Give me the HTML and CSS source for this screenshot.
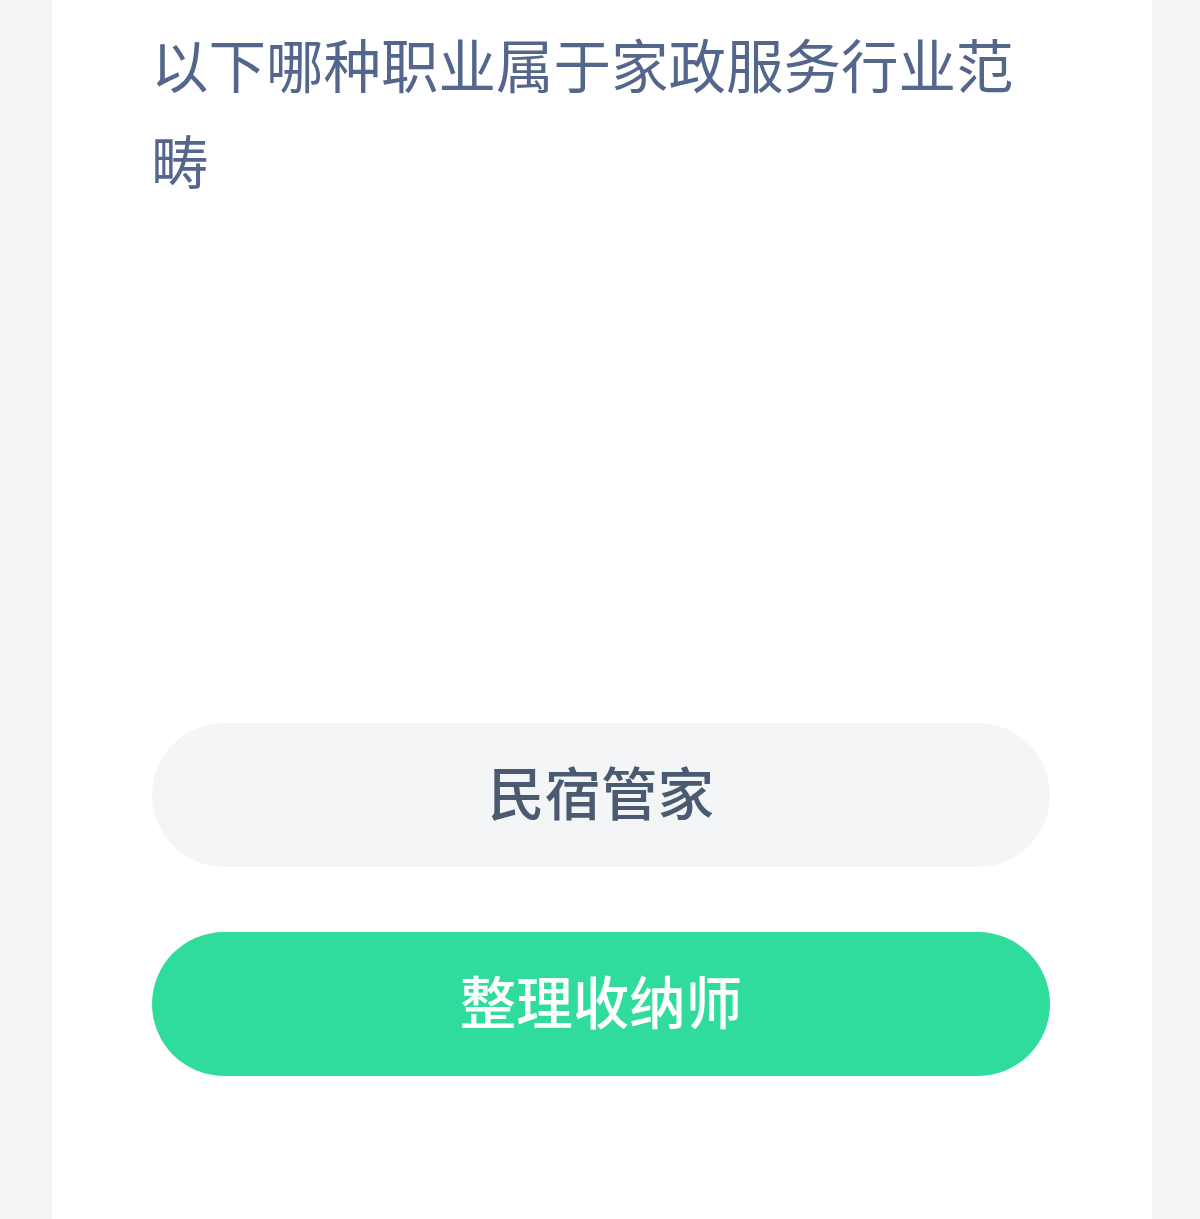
FILE: index.html
```html
<!DOCTYPE html>
<html lang="zh-CN">
<head>
<meta charset="utf-8">
<title>题目</title>
<link rel="stylesheet" href="styles.css">
</head>
<body>
<div class="card">
  <div class="question">以下哪种职业属于家政服务行业范畴</div>
  <div class="options">
    <div class="option">民宿管家</div>
    <div class="option option-correct">整理收纳师</div>
  </div>
</div>
</body>
</html>
```
FILE: styles.css
```css
html, body {
  margin: 0;
  padding: 0;
}
body {
  background: #f4f4f5;
  font-family: "Noto Sans CJK SC", "Noto Sans", sans-serif;
  height: 1219px;
  overflow: hidden;
}
.card {
  box-sizing: border-box;
  margin-left: 52px;
  width: 1100px;
  height: 1219px;
  background: #ffffff;
  padding: 15px 102px 0 99px;
}
.question {
  font-size: 57.5px;
  line-height: 96px;
  color: #55668c;
  font-weight: 400;
  width: 890px;
}
.options {
  margin-top: 516px;
  display: flex;
  flex-direction: column;
  gap: 65px;
  margin-left: 1px;
}
.option {
  box-sizing: border-box;
  height: 144px;
  padding-bottom: 10px;
  border-radius: 72px;
  background: #f4f5f7;
  display: flex;
  align-items: center;
  justify-content: center;
  font-size: 56.5px;
  font-weight: 500;
  color: #4a5a70;
}
.option-correct {
  background: #2fdc9b;
  color: #ffffff;
}
```
